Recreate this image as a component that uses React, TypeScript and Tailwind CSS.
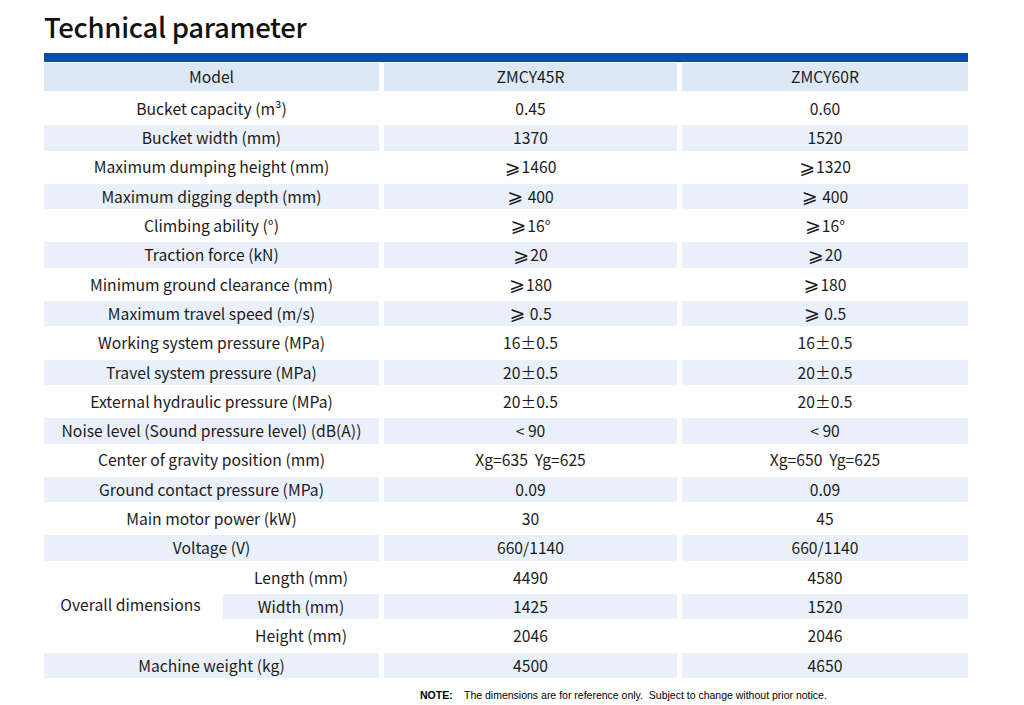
import React from "react";

const rows: [string, string, string][] = [
  ["Bucket capacity (m³)", "0.45", "0.60"],
  ["Bucket width (mm)", "1370", "1520"],
  ["Maximum dumping height (mm)", "⩾1460", "⩾1320"],
  ["Maximum digging depth (mm)", "⩾ 400", "⩾ 400"],
  ["Climbing ability (°)", "⩾16°", "⩾16°"],
  ["Traction force (kN)", "⩾20", "⩾20"],
  ["Minimum ground clearance (mm)", "⩾180", "⩾180"],
  ["Maximum travel speed (m/s)", "⩾ 0.5", "⩾ 0.5"],
  ["Working system pressure (MPa)", "16±0.5", "16±0.5"],
  ["Travel system pressure (MPa)", "20±0.5", "20±0.5"],
  ["External hydraulic pressure (MPa)", "20±0.5", "20±0.5"],
  ["Noise level (Sound pressure level) (dB(A))", "< 90", "< 90"],
  ["Center of gravity position (mm)", "Xg=635  Yg=625", "Xg=650  Yg=625"],
  ["Ground contact pressure (MPa)", "0.09", "0.09"],
  ["Main motor power (kW)", "30", "45"],
  ["Voltage (V)", "660/1140", "660/1140"],
];

const dims: [string, string, string][] = [
  ["Length (mm)", "4490", "4580"],
  ["Width (mm)", "1425", "1520"],
  ["Height (mm)", "2046", "2046"],
];

const font = { fontFamily: '"Noto Sans CJK SC", "Noto Sans", "DejaVu Sans", sans-serif' };

function Txt({ text }: { text: string }) {
  if (text.startsWith("⩾")) {
    return (
      <>
        <span
          className="text-[19px] leading-none mr-[1px]"
          style={{ fontFamily: '"DejaVu Sans", sans-serif' }}
        >
          ⩾
        </span>
        {text.slice(1)}
      </>
    );
  }
  return <>{text}</>;
}

function Cell({ text, shaded, w }: { text: string; shaded: boolean; w: string }) {
  return (
    <div
      className={`${w} h-[25.5px] flex items-center justify-center whitespace-pre ${shaded ? "bg-[#e9f0f9]" : ""}`}
    >
      <Txt text={text} />
    </div>
  );
}

export default function App() {
  return (
    <div
      className="w-[1024px] h-[705px] bg-white overflow-hidden text-[#1b1b1b]"
      style={font}
    >
      <div className="pl-[44px] pt-[6px] h-[53px]">
        <h1 className="text-[27.5px] leading-[40px] font-medium text-[#111] tracking-[-0.3px]">
          Technical parameter
        </h1>
      </div>
      <div className="ml-[44px] w-[924px] text-[15.7px]">
        <div className="h-[9px] bg-[#0b4ea2]" />
        <div className="mt-[1px] mb-[3px] h-[28px] flex gap-[5px]">
          <div className="w-[335px] bg-[#dde8f5] flex items-center justify-center">Model</div>
          <div className="w-[293px] bg-[#dde8f5] flex items-center justify-center">ZMCY45R</div>
          <div className="w-[286px] bg-[#dde8f5] flex items-center justify-center">ZMCY60R</div>
        </div>
        {rows.map((r, i) => {
          const shaded = i % 2 === 1;
          return (
            <div key={i} className="h-[29.3px] flex items-center gap-[5px]">
              <Cell text={r[0]} shaded={shaded} w="w-[335px]" />
              <Cell text={r[1]} shaded={shaded} w="w-[293px]" />
              <Cell text={r[2]} shaded={shaded} w="w-[286px]" />
            </div>
          );
        })}
        <div className="flex gap-[5px]">
          <div className="w-[335px] flex">
            <div className="w-[179px] flex items-center justify-center pb-[3px] pr-[6px]">Overall dimensions</div>
            <div className="w-[156px] flex flex-col">
              {dims.map((d, i) => (
                <div key={i} className="h-[29.3px] flex items-center">
                  <Cell text={d[0]} shaded={i === 1} w="w-[156px]" />
                </div>
              ))}
            </div>
          </div>
          <div className="w-[293px] flex flex-col">
            {dims.map((d, i) => (
              <div key={i} className="h-[29.3px] flex items-center">
                <Cell text={d[1]} shaded={i === 1} w="w-[293px]" />
              </div>
            ))}
          </div>
          <div className="w-[286px] flex flex-col">
            {dims.map((d, i) => (
              <div key={i} className="h-[29.3px] flex items-center">
                <Cell text={d[2]} shaded={i === 1} w="w-[286px]" />
              </div>
            ))}
          </div>
        </div>
        <div className="h-[29.3px] flex items-center gap-[5px]">
          <Cell text="Machine weight (kg)" shaded={true} w="w-[335px]" />
          <Cell text="4500" shaded={true} w="w-[293px]" />
          <Cell text="4650" shaded={true} w="w-[286px]" />
        </div>
      </div>
      <div
        className="mt-[9px] pl-[420px] text-[10.5px] leading-[12px] text-black flex"
        style={{ fontFamily: '"Liberation Sans", Arial, sans-serif' }}
      >
        <span className="font-bold w-[44px]">NOTE:</span>
        <span>The dimensions are for reference only.&nbsp; Subject to change without prior notice.</span>
      </div>
    </div>
  );
}
